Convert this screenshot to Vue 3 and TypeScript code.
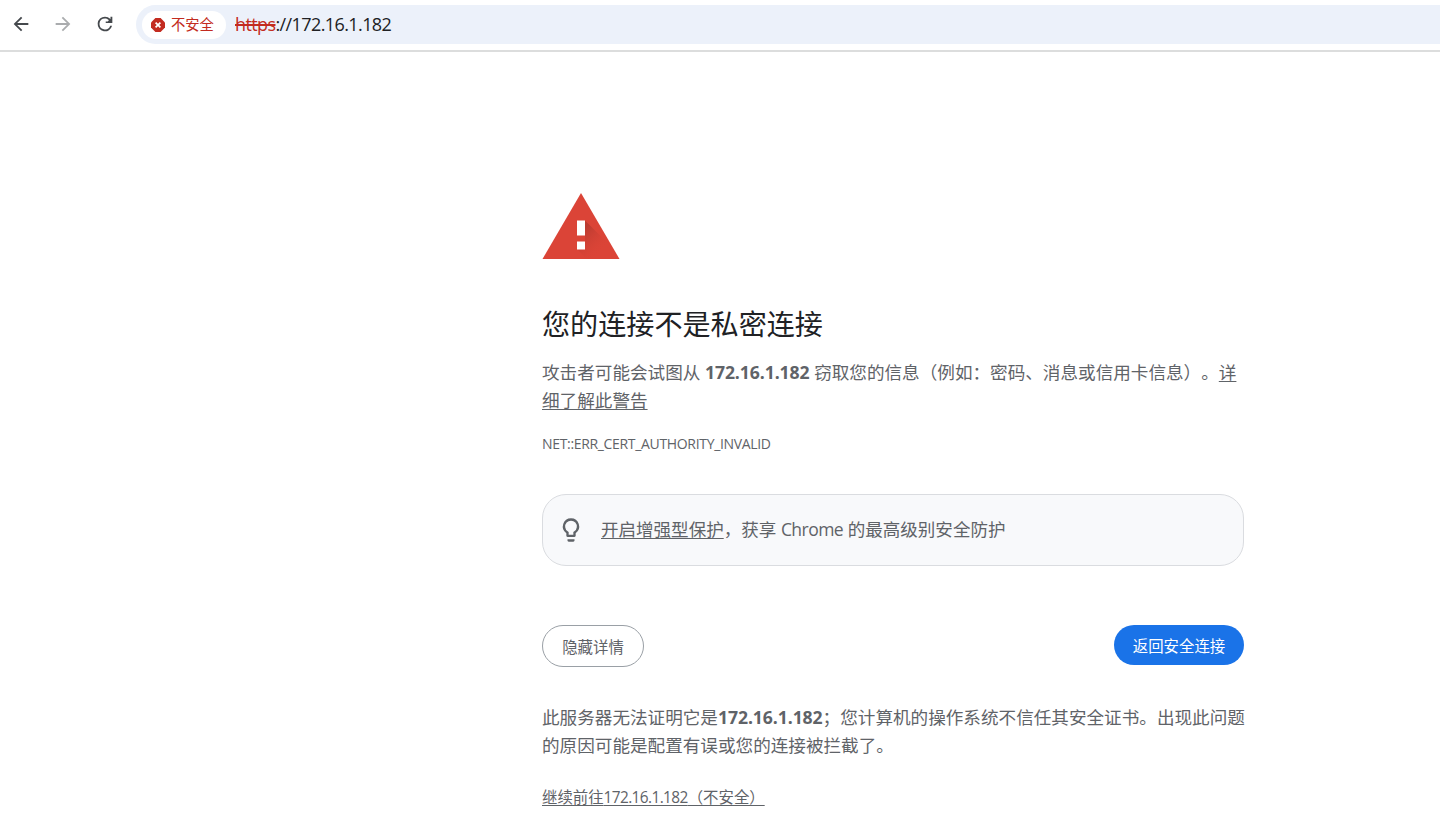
<script setup lang="ts">
const host: string = '172.16.1.182'
</script>

<template>
  <div class="browser">
    <header class="toolbar">
      <button class="nav" aria-label="后退">
        <svg viewBox="0 0 24 24" width="22" height="22"><path d="M20 11H7.83l5.59-5.59L12 4l-8 8 8 8 1.41-1.41L7.83 13H20z" fill="#45494d" /></svg>
      </button>
      <button class="nav" aria-label="前进">
        <svg viewBox="0 0 24 24" width="22" height="22"><path d="M12 4l-1.41 1.41L16.17 11H4v2h12.17l-5.58 5.59L12 20l8-8z" fill="#aaacae" /></svg>
      </button>
      <button class="nav" aria-label="重新加载">
        <svg viewBox="0 0 24 24" width="22" height="22"><path d="M17.65 6.35A7.96 7.96 0 0 0 12 4a8 8 0 1 0 7.73 10h-2.08A6 6 0 1 1 12 6c1.66 0 3.14.69 4.22 1.78L15 9.2H12.8V11H20V4h-2v2.7z" fill="#45494d" /></svg>
      </button>
      <div class="omnibox">
        <span class="chip">
          <svg viewBox="0 0 14 14" width="14" height="14"><path d="M4.4 0h5.2L14 4.4v5.2L9.6 14H4.4L0 9.6V4.4z" fill="#c32b20" /><path d="M4.6 4.6l4.8 4.8M9.4 4.6L4.6 9.4" stroke="#fff" stroke-width="1.7" /></svg>
          <span class="chip-text">不安全</span>
        </span>
        <span class="url"><s>https</s>://{{ host }}</span>
      </div>
    </header>

    <main class="content">
      <svg class="warning" viewBox="0 0 78 67" width="78" height="67">
        <defs>
          <linearGradient id="shade" gradientUnits="userSpaceOnUse" x1="40" y1="38" x2="60" y2="58">
            <stop offset="0" stop-color="#b0382e" stop-opacity=".75" />
            <stop offset="1" stop-color="#db4437" stop-opacity="0" />
          </linearGradient>
        </defs>
        <path d="M39 0l38.5 66H.5z" fill="#db4437" />
        <path d="M43 27.5L73 57.5 77.5 66H45L35 56l8-8z" fill="url(#shade)" />
        <path d="M35 27.5h8v15h-8zM35 48.5h8v8h-8z" fill="#fff" />
      </svg>
      <h1>您的连接不是私密连接</h1>
      <p class="message">攻击者可能会试图从 <b>{{ host }}</b> 窃取您的信息（例如：密码、消息或信用卡信息）。<a>详<br />细了解此警告</a></p>
      <div class="code">NET::ERR_CERT_AUTHORITY_INVALID</div>
      <section class="tip">
        <svg viewBox="0 0 24 24" width="28" height="28"><path d="M9 21c0 .55.45 1 1 1h4c.55 0 1-.45 1-1v-1H9zM12 2a7 7 0 0 0-4 12.74V17c0 .55.45 1 1 1h6c.55 0 1-.45 1-1v-2.26A7 7 0 0 0 12 2zm2.85 11.1l-.85.6V16h-4v-2.3l-.85-.6A5 5 0 1 1 14.85 13.1z" fill="#5f6368" /></svg>
        <p><a>开启增强型保护</a>，获享 <span class="latin">Chrome</span> 的最高级别安全防护</p>
      </section>
      <div class="actions">
        <button class="pill outline">隐藏详情</button>
        <button class="pill primary">返回安全连接</button>
      </div>
      <p class="message details">此服务器无法证明它是<b>{{ host }}</b>；您计算机的操作系统不信任其安全证书。出现此问题<br />的原因可能是配置有误或您的连接被拦截了。</p>
      <a class="proceed">继续前往<span class="ip">{{ host }}</span>（不安全）</a>
    </main>
  </div>
</template>

<style>
html, body { margin: 0; background: #fff; }
</style>

<style scoped>
.browser {
  height: 832px;
  overflow: hidden;
  font-family: "Open Sans", "Noto Sans CJK SC", sans-serif;
  color: #5f6368;
  text-spacing-trim: space-all;
  white-space: nowrap;
}
.toolbar {
  box-sizing: border-box;
  height: 52px;
  display: flex;
  align-items: flex-start;
  padding: 5px 0 0 10px;
  border-bottom: 2px solid #dcdddd;
}
button { font: inherit; border: 0; background: none; padding: 0; }
.nav { width: 22px; height: 38px; margin-right: 20px; display: flex; align-items: center; }
.omnibox {
  flex: 1;
  height: 39px;
  display: flex;
  align-items: center;
  background: #ecf1fa;
  border-radius: 20px 0 0 20px;
  padding-left: 6px;
}
.chip {
  box-sizing: border-box;
  width: 84px;
  height: 28px;
  border-radius: 14px;
  background: #fff;
  color: #c32b20;
  display: flex;
  align-items: center;
  gap: 6px;
  padding-left: 9px;
  font-size: 14.3px;
}
.chip-text { line-height: 30px; }
.url { margin: 0 0 2px 9px; font-size: 18px; letter-spacing: -0.6px; color: #202124; }
.url s { color: #c32b20; text-decoration-thickness: 2px; }
.content { width: 702px; margin-left: 542px; padding-top: 141px; }
.warning { display: block; }
h1 {
  margin: 43px 0 0;
  font-size: 28.1px;
  line-height: 42px;
  font-weight: 400;
  color: #202124;
}
p { margin: 0; }
.message { margin-top: 13px; font-size: 17.6px; line-height: 28px; }
.message b { letter-spacing: -0.08px; }
a { text-decoration: underline; text-decoration-thickness: 1px; text-underline-offset: 2px; }
.code { margin-top: 19px; font-size: 14px; line-height: 21px; letter-spacing: -0.33px; }
.tip {
  box-sizing: border-box;
  height: 72px;
  margin-top: 40px;
  border: 1px solid #dadce0;
  border-radius: 24px;
  background: #f8f9fb;
  display: flex;
  align-items: center;
  gap: 16px;
  padding-left: 14px;
  font-size: 17.55px;
}
.tip svg { margin-bottom: 1px; }
.tip p { margin-bottom: 3px; }
.latin { letter-spacing: -0.55px; }
.actions { margin-top: 59px; display: flex; justify-content: space-between; align-items: flex-start; }
.pill { box-sizing: border-box; border-radius: 21px; font-size: 15.4px; }
.outline { width: 102px; height: 42px; border: 1px solid #9aa0a6; color: #5f6368; }
.primary { width: 130px; height: 40px; background: #1a73e8; color: #fff; }
.details { margin-top: 36px; }
.proceed { display: inline-block; margin-top: 27px; font-size: 15.4px; line-height: 24px; }
.ip { letter-spacing: -0.6px; }
</style>
